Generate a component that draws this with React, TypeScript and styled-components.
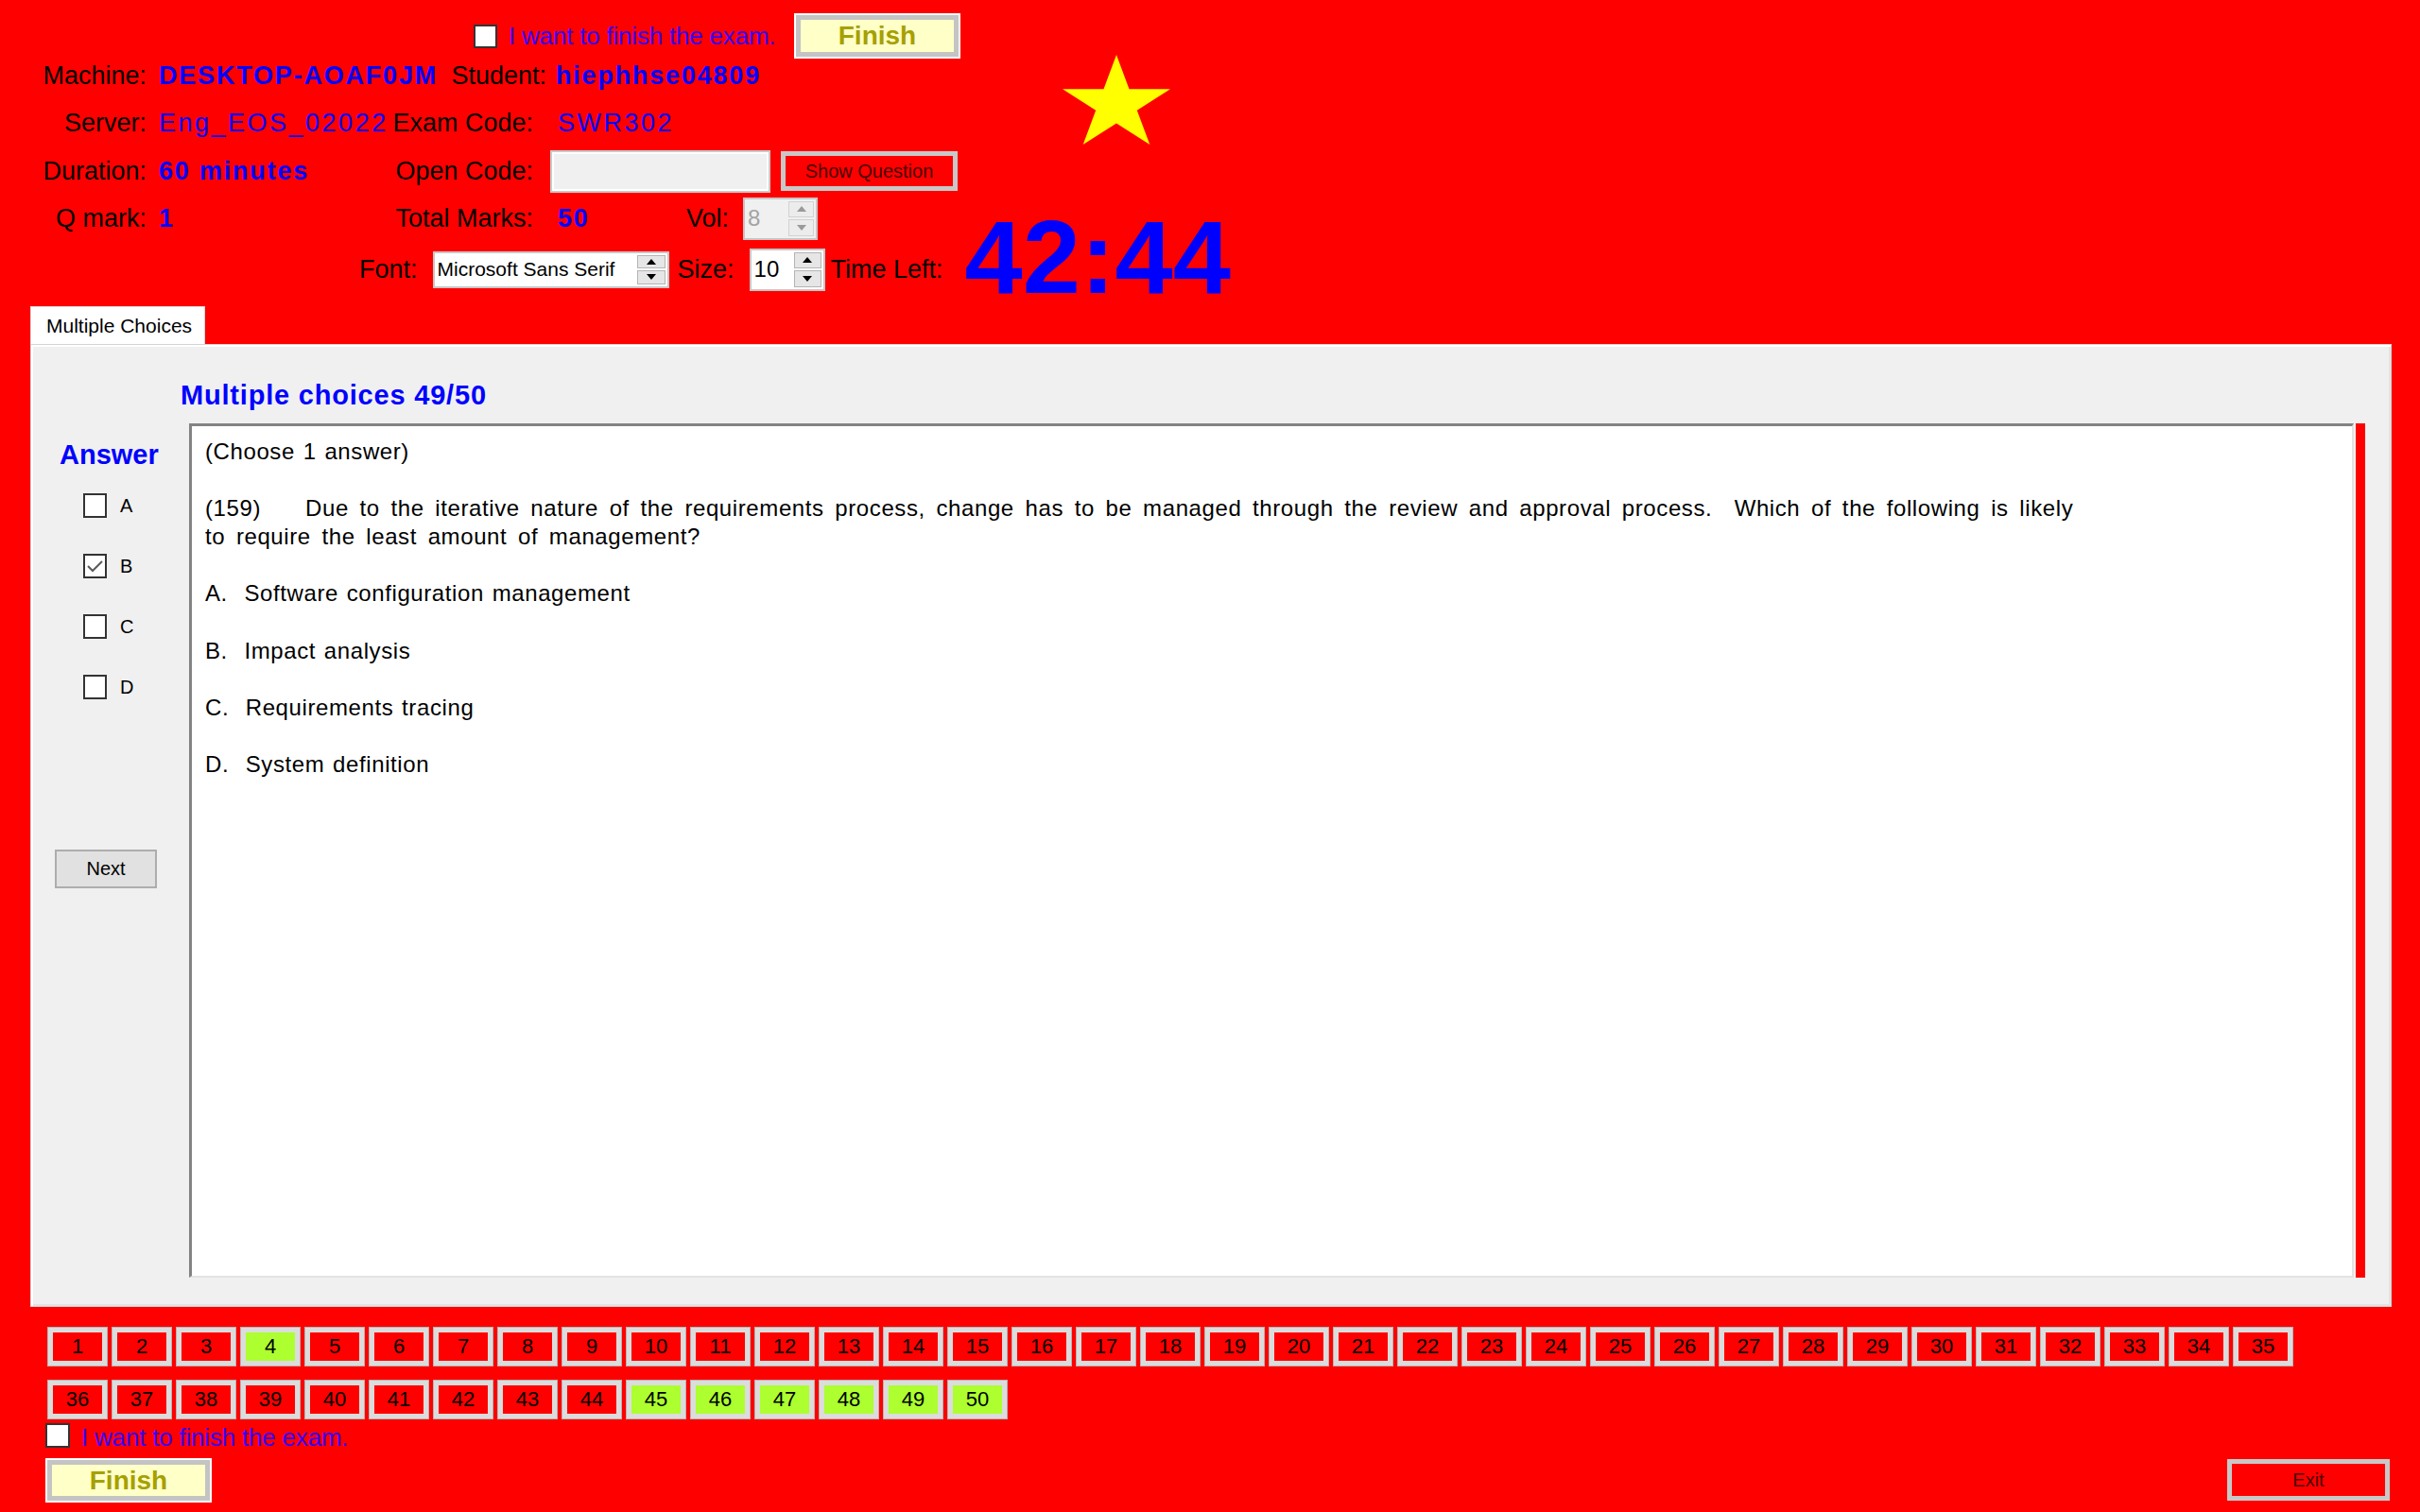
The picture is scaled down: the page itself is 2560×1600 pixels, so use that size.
import React from "react";
import styled, { createGlobalStyle } from "styled-components";

const Global = createGlobalStyle`
  html, body { margin: 0; padding: 0; background: #ff0000; }
  body { font-family: "Liberation Sans", Arial, sans-serif; overflow: hidden; }
  * { box-sizing: border-box; }
`;

const Screen = styled.div`
  width: 2560px;
  height: 1600px;
  background: #ff0000;
  display: flex;
  flex-direction: column;
  padding-top: 14px;
  color: #000;
  font-family: "Liberation Sans", Arial, sans-serif;
`;

/* ---------- header ---------- */
const Upper = styled.div`
  display: flex;
`;
const InfoStack = styled.div`
  width: 1040px;
  flex: none;
  display: flex;
  flex-direction: column;
`;
const StarCell = styled.div`
  padding: 44px 0 0 84px;
`;
const Row = styled.div<{ $h: number; $mt: number; $pl?: number }>`
  display: flex;
  align-items: center;
  height: ${(p) => p.$h}px;
  margin-top: ${(p) => p.$mt}px;
  padding-left: ${(p) => p.$pl ?? 0}px;
  font-size: 27px;
  white-space: nowrap;
`;
const Label = styled.span<{ $w?: number; $ml?: number }>`
  flex: none;
  color: #000;
  ${(p) => (p.$w ? `width: ${p.$w}px; text-align: right;` : "")}
  margin-left: ${(p) => p.$ml ?? 0}px;
`;
const Value = styled.span<{ $w?: number; $ml: number; $bold?: boolean }>`
  flex: none;
  color: #0000ff;
  font-weight: ${(p) => (p.$bold ? 700 : 400)};
  letter-spacing: ${(p) => (p.$bold ? 1.8 : 2.5)}px;
  margin-left: ${(p) => p.$ml}px;
  ${(p) => (p.$w ? `width: ${p.$w}px;` : "")}
`;
const CheckBox = styled.span<{ $w?: number; $h?: number }>`
  flex: none;
  display: inline-flex;
  align-items: center;
  justify-content: center;
  width: ${(p) => p.$w ?? 25}px;
  height: ${(p) => p.$h ?? 25}px;
  background: #fff;
  border: 2px solid #333;
`;
const FinishText = styled.span<{ $w?: number; $ml: number }>`
  flex: none;
  font-size: 26px;
  letter-spacing: -0.2px;
  color: #3300ff;
  margin-left: ${(p) => p.$ml}px;
  ${(p) => (p.$w ? `width: ${p.$w}px;` : "")}
  white-space: nowrap;
`;
const FinishButton = styled.div<{ $h: number }>`
  flex: none;
  width: 176px;
  height: ${(p) => p.$h}px;
  border: 2px solid #fff;
  box-shadow: inset 0 0 0 5px #c4c4c4;
  background: #ffffc8;
  display: flex;
  align-items: center;
  justify-content: center;
  font-size: 28px;
  font-weight: 700;
  color: #a6a000;
`;
const CodeInput = styled.div`
  flex: none;
  width: 233px;
  height: 45px;
  margin-left: 18px;
  background: #f0f0f0;
  border: 2px solid #c9c9c9;
  box-shadow: inset 0 0 0 2px #fff;
`;
const RedButton = styled.div<{ $w: number; $h: number; $ml?: number }>`
  flex: none;
  width: ${(p) => p.$w}px;
  height: ${(p) => p.$h}px;
  margin-left: ${(p) => p.$ml ?? 0}px;
  background: #ff0000;
  border: 5px solid #c8c8c8;
  display: flex;
  align-items: center;
  justify-content: center;
  font-size: 20px;
  color: #4a0000;
`;

/* spin boxes */
const SpinBox = styled.div<{ $w: number; $h: number; $ml?: number; $disabled?: boolean }>`
  flex: none;
  width: ${(p) => p.$w}px;
  height: ${(p) => p.$h}px;
  margin-left: ${(p) => p.$ml ?? 0}px;
  background: ${(p) => (p.$disabled ? "#f0f0f0" : "#fff")};
  border: 2px solid #c6c6c6;
  display: flex;
  align-items: stretch;
`;
const SpinText = styled.div<{ $size: number; $disabled?: boolean }>`
  flex: 1;
  display: flex;
  align-items: center;
  padding-left: 3px;
  font-size: ${(p) => p.$size}px;
  color: ${(p) => (p.$disabled ? "#a3a3a3" : "#000")};
  overflow: hidden;
  white-space: nowrap;
`;
const SpinArrows = styled.div<{ $w: number }>`
  flex: none;
  width: ${(p) => p.$w}px;
  display: flex;
  flex-direction: column;
  gap: 2px;
  padding: 2px 2px 2px 0;
`;
const SpinArrow = styled.div<{ $disabled?: boolean }>`
  flex: 1;
  background: ${(p) => (p.$disabled ? "#ececec" : "#e6e6e6")};
  border: 1px solid ${(p) => (p.$disabled ? "#d2d2d2" : "#b4b4b4")};
  display: flex;
  align-items: center;
  justify-content: center;
`;
const Tri = styled.span<{ $down?: boolean; $disabled?: boolean }>`
  width: 0;
  height: 0;
  border-left: 5px solid transparent;
  border-right: 5px solid transparent;
  ${(p) =>
    p.$down
      ? `border-top: 6px solid ${p.$disabled ? "#9a9a9a" : "#000"};`
      : `border-bottom: 6px solid ${p.$disabled ? "#9a9a9a" : "#000"};`}
`;
const Timer = styled.div`
  flex: none;
  margin-left: 23px;
  margin-top: -26px;
  font-size: 110px;
  line-height: 1;
  font-weight: 700;
  color: #0000ff;
`;

/* ---------- tab panel ---------- */
const TabControl = styled.div`
  margin: 16px 0 0 32px;
  width: 2498px;
  display: flex;
  flex-direction: column;
`;
const TabStrip = styled.div`
  display: flex;
  height: 40px;
`;
const Tab = styled.div`
  width: 185px;
  height: 40px;
  background: #fff;
  border: 1px solid #d9d9d9;
  border-bottom: none;
  font-size: 21px;
  padding-left: 16px;
  display: flex;
  align-items: center;
`;
const TabPage = styled.div`
  height: 1019px;
  background: #f0f0f0;
  border: 1px solid #d4d4d4;
  box-shadow: inset 2px 2px 0 #fff, inset -2px -2px 0 #e3e3e3;
  display: flex;
`;
const Sidebar = styled.div`
  width: 158px;
  flex: none;
  display: flex;
  flex-direction: column;
  padding-top: 98px;
`;
const AnswerHeading = styled.div`
  margin-left: 30px;
  font-size: 29px;
  line-height: 36px;
  font-weight: 700;
  color: #0000ff;
`;
const AnswerList = styled.div`
  margin-top: 4px;
  display: flex;
  flex-direction: column;
`;
const AnswerRow = styled.div`
  height: 64px;
  display: flex;
  align-items: center;
  gap: 14px;
  padding-left: 55px;
`;
const AnswerLetter = styled.span`
  font-size: 20px;
  color: #000;
`;
const NextButton = styled.div`
  margin: 140px 0 0 25px;
  width: 108px;
  height: 41px;
  background: #e1e1e1;
  border: 2px solid #adadad;
  display: flex;
  align-items: center;
  justify-content: center;
  font-size: 20px;
  color: #000;
`;
const Main = styled.div`
  flex: 1;
  display: flex;
  flex-direction: column;
  padding-top: 35px;
`;
const Title = styled.div`
  font-size: 29px;
  line-height: 36px;
  height: 36px;
  font-weight: 700;
  letter-spacing: 0.8px;
  color: #0000ff;
`;
const QuestionRow = styled.div`
  margin: 12px 0 0 9px;
  height: 904px;
  display: flex;
`;
const QuestionBox = styled.div`
  width: 2290px;
  height: 904px;
  flex: none;
  background: #fff;
  border-top: 3px solid #838383;
  border-left: 3px solid #838383;
  border-right: 2px solid #e3e3e3;
  border-bottom: 2px solid #e3e3e3;
  padding: 12px 14px;
  font-size: 24px;
  letter-spacing: 0.6px;
  word-spacing: 1.5px;
  line-height: 30.1px;
  color: #000;
`;
const QP = styled.p<{ $ws?: number }>`
  margin: 0 0 30.1px 0;
  white-space: pre-wrap;
  ${(p) => (p.$ws ? `word-spacing: ${p.$ws}px;` : "")}
`;
const TabGap = styled.span`
  display: inline-block;
  width: 47px;
`;
const RedBar = styled.div`
  width: 10px;
  margin-left: 2px;
  height: 904px;
  background: #ff0000;
`;

/* ---------- bottom ---------- */
const NumberGrid = styled.div`
  margin: 21px 0 0 50px;
  display: flex;
  flex-direction: column;
  gap: 14px;
`;
const NumRow = styled.div`
  display: flex;
  gap: 4px;
`;
const NumButton = styled.div<{ $done?: boolean }>`
  width: 64px;
  height: 42px;
  flex: none;
  border: 6px solid #dcdcdc;
  outline: 1px solid #b4b4b4;
  outline-offset: -1px;
  background: ${(p) => (p.$done ? "#adff2f" : "#ff0000")};
  display: flex;
  align-items: center;
  justify-content: center;
  font-size: 22px;
  color: #000;
`;
const CheckRow = styled.div`
  margin-top: 4px;
  height: 26px;
  padding-left: 48px;
  display: flex;
  align-items: center;
`;
const BottomText = styled(FinishText)`
  padding-top: 5px;
`;
const BottomRow = styled.div`
  margin-top: 11px;
  padding: 0 32px 0 48px;
  display: flex;
  justify-content: space-between;
  align-items: flex-start;
`;
const ExitWrap = styled.div`
  margin-top: 1px;
`;

const Star = () => (
  <svg width="114" height="95" viewBox="0 0 114 108.5" preserveAspectRatio="none">
    <polygon
      fill="#ffff00"
      points="57,0 70.5,41.5 114,41.5 78.8,67.1 92.3,108.5 57,82.9 21.7,108.5 35.2,67.1 0,41.5 43.5,41.5"
    />
  </svg>
);

const Tick = () => (
  <svg width="19" height="16" viewBox="0 0 19 16">
    <polyline points="2,8 7,13 17,3" fill="none" stroke="#5a5a5a" strokeWidth="2" />
  </svg>
);

const Spin: React.FC<{
  w: number;
  h: number;
  ml?: number;
  text: string;
  size: number;
  aw: number;
  disabled?: boolean;
}> = ({ w, h, ml, text, size, aw, disabled }) => (
  <SpinBox $w={w} $h={h} $ml={ml} $disabled={disabled}>
    <SpinText $size={size} $disabled={disabled}>{text}</SpinText>
    <SpinArrows $w={aw}>
      <SpinArrow $disabled={disabled}>
        <Tri $disabled={disabled} />
      </SpinArrow>
      <SpinArrow $disabled={disabled}>
        <Tri $down $disabled={disabled} />
      </SpinArrow>
    </SpinArrows>
  </SpinBox>
);

const done = new Set([4, 45, 46, 47, 48, 49, 50]);
const row1 = Array.from({ length: 35 }, (_, i) => i + 1);
const row2 = Array.from({ length: 15 }, (_, i) => i + 36);

export default function App() {
  return (
    <>
      <Global />
      <Screen>
        <Upper>
          <InfoStack>
            <Row $h={48} $mt={0} $pl={501}>
              <CheckBox />
              <FinishText $ml={12} $w={302}>I want to finish the exam.</FinishText>
              <FinishButton $h={48}>Finish</FinishButton>
            </Row>
            <Row $h={36} $mt={0}>
              <Label $w={155}>Machine:</Label>
              <Value $ml={13} $w={295} $bold>DESKTOP-AOAF0JM</Value>
              <Label $w={115}>Student:</Label>
              <Value $ml={10} $bold>hiephhse04809</Value>
            </Row>
            <Row $h={36} $mt={14}>
              <Label $w={155}>Server:</Label>
              <Value $ml={13} $w={245}>Eng_EOS_02022</Value>
              <Label $w={151}>Exam Code:</Label>
              <Value $ml={26}>SWR302</Value>
            </Row>
            <Row $h={46} $mt={10}>
              <Label $w={155}>Duration:</Label>
              <Value $ml={13} $w={245} $bold>60 minutes</Value>
              <Label $w={151}>Open Code:</Label>
              <CodeInput />
              <RedButton $w={187} $h={42} $ml={11}>Show Question</RedButton>
            </Row>
            <Row $h={46} $mt={4}>
              <Label $w={155}>Q mark:</Label>
              <Value $ml={13} $w={245} $bold>1</Value>
              <Label $w={151}>Total Marks:</Label>
              <Value $ml={26} $w={136} $bold>50</Value>
              <Label>Vol:</Label>
              <Spin w={79} h={45} ml={15} text="8" size={24} aw={29} disabled />
            </Row>
          </InfoStack>
          <StarCell>
            <Star />
          </StarCell>
        </Upper>
        <Row $h={46} $mt={8} $pl={380}>
          <Label>Font:</Label>
          <Spin w={250} h={39} ml={16} text="Microsoft Sans Serif" size={21} aw={32} />
          <Label $ml={9}>Size:</Label>
          <Spin w={80} h={45} ml={16} text="10" size={24} aw={31} />
          <Label $ml={6}>Time Left:</Label>
          <Timer>42:44</Timer>
        </Row>

        <TabControl>
          <TabStrip>
            <Tab>Multiple Choices</Tab>
          </TabStrip>
          <TabPage>
            <Sidebar>
              <AnswerHeading>Answer</AnswerHeading>
              <AnswerList>
                {["A", "B", "C", "D"].map((l) => (
                  <AnswerRow key={l}>
                    <CheckBox $w={25} $h={26}>{l === "B" ? <Tick /> : null}</CheckBox>
                    <AnswerLetter>{l}</AnswerLetter>
                  </AnswerRow>
                ))}
              </AnswerList>
              <NextButton>Next</NextButton>
            </Sidebar>
            <Main>
              <Title>Multiple choices 49/50</Title>
              <QuestionRow>
                <QuestionBox>
                  <QP>(Choose 1 answer)</QP>
                  <QP $ws={4.4}>
                    (159)<TabGap />Due to the iterative nature of the requirements process, change has to be managed through the review and approval process.  Which of the following is likely
                    <br />
                    to require the least amount of management?
                  </QP>
                  <QP>A.  Software configuration management</QP>
                  <QP>B.  Impact analysis</QP>
                  <QP>C.  Requirements tracing</QP>
                  <QP>D.  System definition</QP>
                </QuestionBox>
                <RedBar />
              </QuestionRow>
            </Main>
          </TabPage>
        </TabControl>

        <NumberGrid>
          <NumRow>
            {row1.map((n) => (
              <NumButton key={n} $done={done.has(n)}>{n}</NumButton>
            ))}
          </NumRow>
          <NumRow>
            {row2.map((n) => (
              <NumButton key={n} $done={done.has(n)}>{n}</NumButton>
            ))}
          </NumRow>
        </NumberGrid>
        <CheckRow>
          <CheckBox $w={26} $h={26} />
          <BottomText $ml={12}>I want to finish the exam.</BottomText>
        </CheckRow>
        <BottomRow>
          <FinishButton $h={47}>Finish</FinishButton>
          <ExitWrap>
            <RedButton $w={172} $h={44}>Exit</RedButton>
          </ExitWrap>
        </BottomRow>
      </Screen>
    </>
  );
}
